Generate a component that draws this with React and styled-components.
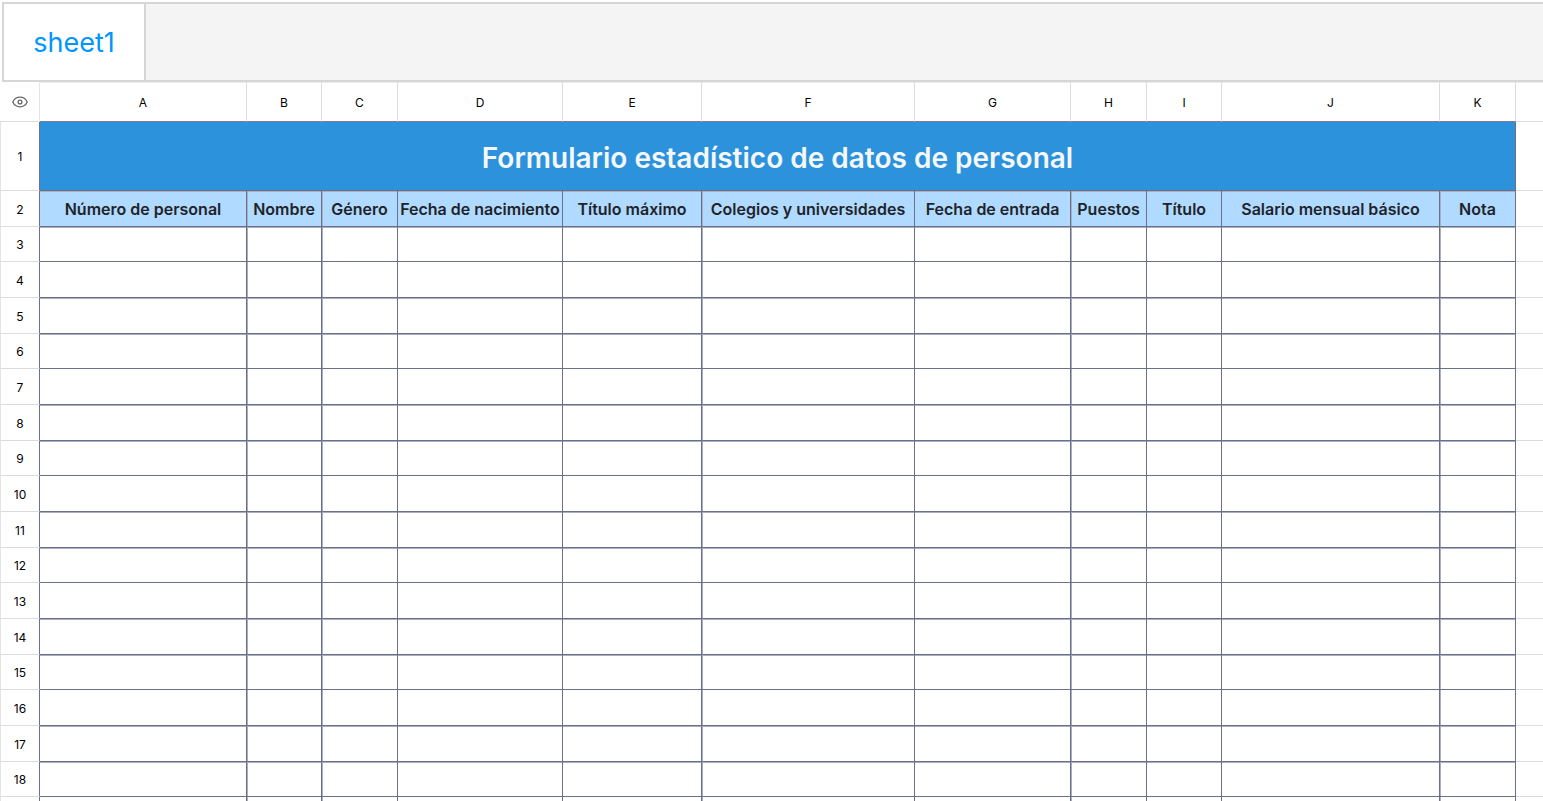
import React from "react";
import styled, { createGlobalStyle } from "styled-components";

const GlobalStyle = createGlobalStyle`
  * { box-sizing: border-box; }
  body {
    margin: 0;
    background: #fff;
    font-family: Inter, "Liberation Sans", sans-serif;
    color: #000;
  }
`;

const Page = styled.main`
  display: flex;
  flex-direction: column;
  height: 100vh;
  overflow: hidden;
`;

const TabBar = styled.nav`
  display: flex;
  flex: none;
  height: 80px;
  margin: 2px 0 0 2px;
  background: #f4f4f4;
  border: 2px solid #d6d6d6;
  border-right: 0;
`;

const Tab = styled.button`
  min-width: 142px;
  padding: 2px 28px 0;
  border: 0;
  border-right: 2px solid #d6d6d6;
  background: #fff;
  color: #0095ff;
  font: 400 27px/36px Inter, "Liberation Sans", sans-serif;
  cursor: pointer;
`;

const Sheet = styled.table`
  width: 100%;
  flex: none;
  table-layout: fixed;
  border-collapse: separate;
  border-spacing: 0;
`;

const Column = styled.col`
  width: ${(p) => (p.$width ? `${p.$width}px` : "auto")};
`;

const Row = styled.tr`
  height: ${(p) => p.$height}px;
`;

const HeadCell = styled.th`
  padding: 2px 0 0;
  border-top: 1px solid #ececec;
  border-right: 1px solid #dcdcdc;
  border-bottom: 1px solid #dcdcdc;
  font-size: 12px;
  line-height: 16px;
  font-weight: 400;
`;

const Corner = styled(HeadCell)`
  padding: 0;
  border-right-color: #e4e4e4;
  border-top-color: transparent;

  svg { display: block; margin: 0 auto; }
`;

const ColumnHead = styled(HeadCell)`
  border-bottom-color: #777c90;
`;

const RowHead = styled(HeadCell)`
  border-top: 0;
  border-left: 1px solid #e4e4e4;
  border-right-color: #6b7089;
`;

const Cell = styled.td`
  padding: 0;
  border-right: 1px solid #6b7089;
  border-bottom: 1px solid #6b7089;
  box-shadow:
    inset ${(p) => (p.$softLeft ? 1 : 0)}px 0 0 #aaaec0,
    inset 0 ${(p) => (p.$softTop ? 1 : 0)}px 0 #aaaec0;
`;

const TitleCell = styled(Cell)`
  padding-top: 3px;
  background: #2c92dc;
  color: #f4f7fb;
  font-size: 28px;
  line-height: 36px;
  font-weight: 600;
  text-align: center;
`;

const LabelCell = styled(Cell)`
  background: #b0daff;
  color: #1f2329;
  font-size: 16px;
  line-height: 20px;
  font-weight: 600;
  text-align: center;
  white-space: nowrap;
`;

const OuterCell = styled.td`
  padding: 0;
  border-bottom: 1px solid #dcdcdc;
`;

const OuterHead = styled(OuterCell)`
  border-top: 1px solid #ececec;
`;

const columns = [
  { letter: "A", width: 207, label: "Número de personal" },
  { letter: "B", width: 75, label: "Nombre", softLeft: true },
  { letter: "C", width: 76, label: "Género", softLeft: true },
  { letter: "D", width: 165, label: "Fecha de nacimiento" },
  { letter: "E", width: 139, label: "Título máximo" },
  { letter: "F", width: 213, label: "Colegios y universidades", softLeft: true },
  { letter: "G", width: 156, label: "Fecha de entrada" },
  { letter: "H", width: 76, label: "Puestos", softLeft: true },
  { letter: "I", width: 75, label: "Título" },
  { letter: "J", width: 218, label: "Salario mensual básico" },
  { letter: "K", width: 76, label: "Nota", softLeft: true },
];

const emptyRows = Array.from({ length: 16 }, (_, i) => i + 3);

const rowHeight = (n) => (n % 3 === 0 ? 35 : 36);
const hasSoftTop = (n) => (n - 1) % 3 !== 0;

function EyeIcon() {
  return (
    <svg width="16" height="12" viewBox="0 0 16 12" fill="none" stroke="#666" strokeWidth="1.3" aria-hidden="true">
      <path d="M0.7 6C2.2 3 4.8 1.2 8 1.2S13.8 3 15.3 6C13.8 9 11.2 10.8 8 10.8S2.2 9 0.7 6Z" />
      <circle cx="8" cy="6" r="1.9" />
    </svg>
  );
}

export default function App() {
  return (
    <Page>
      <GlobalStyle />
      <TabBar>
        <Tab type="button">sheet1</Tab>
      </TabBar>
      <Sheet>
        <colgroup>
          <Column $width={40} />
          {columns.map((c) => (
            <Column key={c.letter} $width={c.width} />
          ))}
          <Column />
        </colgroup>
        <thead>
          <Row $height={40}>
            <Corner>
              <EyeIcon />
            </Corner>
            {columns.map((c) => (
              <ColumnHead key={c.letter} scope="col">{c.letter}</ColumnHead>
            ))}
            <OuterHead />
          </Row>
        </thead>
        <tbody>
          <Row $height={69}>
            <RowHead scope="row">1</RowHead>
            <TitleCell colSpan={columns.length}>Formulario estadístico de datos de personal</TitleCell>
            <OuterCell />
          </Row>
          <Row $height={36}>
            <RowHead scope="row">2</RowHead>
            {columns.map((c) => (
              <LabelCell key={c.letter} $softLeft={c.softLeft} $softTop>{c.label}</LabelCell>
            ))}
            <OuterCell />
          </Row>
          {emptyRows.map((n) => (
            <Row key={n} $height={rowHeight(n)}>
              <RowHead scope="row">{n}</RowHead>
              {columns.map((c) => (
                <Cell key={c.letter} $softLeft={c.softLeft} $softTop={hasSoftTop(n)} />
              ))}
              <OuterCell />
            </Row>
          ))}
          <Row $height={36}>
            <RowHead as="td" />
            {columns.map((c) => (
              <Cell key={c.letter} $softLeft={c.softLeft} />
            ))}
            <OuterCell />
          </Row>
        </tbody>
      </Sheet>
    </Page>
  );
}
